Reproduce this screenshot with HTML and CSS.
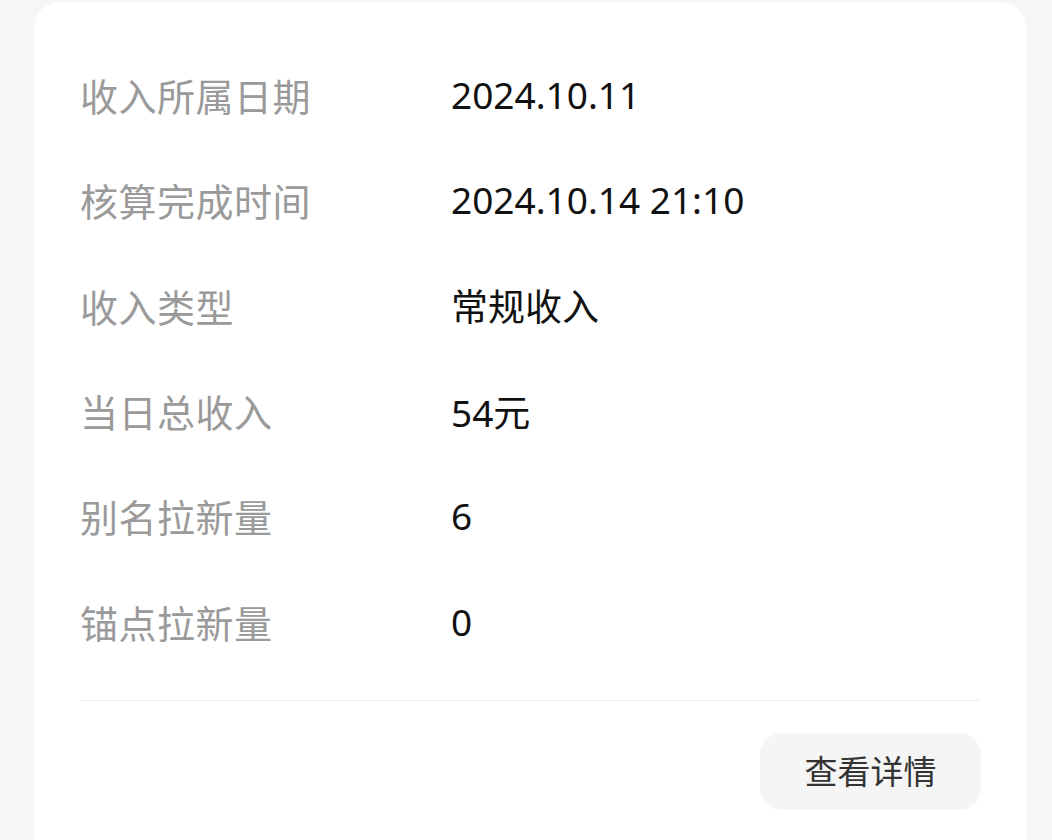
FILE: index.html
```html
<!DOCTYPE html>
<html>
<head>
    <meta charset="utf-8">
    <title>收入详情</title>
    <link rel="stylesheet" href="styles.css">
</head>
<body>
<div class="card">
    <div class="rows">
        <div class="label">收入所属日期</div>
        <div class="value">2024.10.11</div>

        <div class="label">核算完成时间</div>
        <div class="value">2024.10.14 21:10</div>

        <div class="label">收入类型</div>
        <div class="value">常规收入</div>

        <div class="label">当日总收入</div>
        <div class="value">54元</div>

        <div class="label">别名拉新量</div>
        <div class="value">6</div>

        <div class="label">锚点拉新量</div>
        <div class="value">0</div>
    </div>

    <div class="divider"></div>

    <div class="actions">
        <div class="btn">查看详情</div>
    </div>
</div>
</body>
</html>
```

FILE: styles.css
```css
body {
    margin: 0;
    padding: 2px 26px 0 34px;
    background-color: #f8f5f6;
    font-family: "Noto Sans", "Noto Sans CJK SC", sans-serif;
}

.card {
    background-color: #ffffff;
    border-radius: 26px 26px 0 0;
    padding: 40px 45px 40px 46px;
    min-height: 800px;
    box-sizing: border-box;
}

.rows {
    display: grid;
    grid-template-columns: 371px 1fr;
    grid-auto-rows: 105.3px;
    align-items: center;
}

.label {
    font-size: 38px;
    color: #9a9a9a;
    letter-spacing: 0.5px;
}

.value {
    font-size: 37px;
    color: #111111;
}

.divider {
    height: 1px;
    background-color: #eeeeee;
    margin-top: 26px;
}

.actions {
    display: flex;
    justify-content: flex-end;
    margin-top: 32px;
}

.btn {
    width: 221px;
    height: 77px;
    line-height: 78px;
    text-align: center;
    background-color: #f5f5f5;
    border-radius: 22px;
    font-size: 33px;
    color: #333333;
}
```
